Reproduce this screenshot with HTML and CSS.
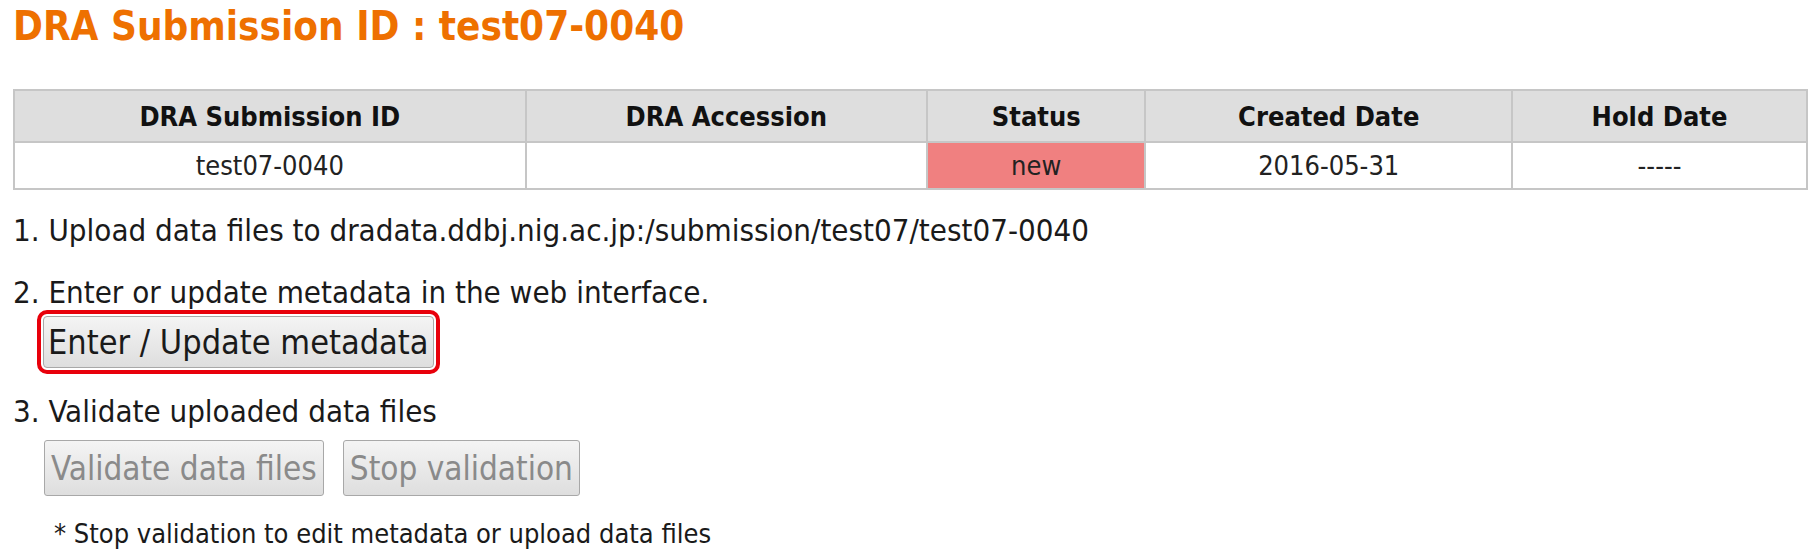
FILE: index.html
```html
<!DOCTYPE html>
<html>
<head>
<meta charset="utf-8">
<link rel="stylesheet" href="styles.css">
</head>
<body>
<div class="page">
  <h1 class="title">DRA Submission ID : test07-0040</h1>
  <table class="info">
    <thead>
      <tr>
        <th class="c1">DRA Submission ID</th>
        <th class="c2">DRA Accession</th>
        <th class="c3">Status</th>
        <th class="c4">Created Date</th>
        <th class="c5">Hold Date</th>
      </tr>
    </thead>
    <tbody>
      <tr>
        <td>test07-0040</td>
        <td></td>
        <td class="status-new">new</td>
        <td>2016-05-31</td>
        <td>-----</td>
      </tr>
    </tbody>
  </table>

  <p class="step step1">1. Upload data files to dradata.ddbj.nig.ac.jp:/submission/test07/test07-0040</p>

  <p class="step step2">2. Enter or update metadata in the web interface.</p>
  <div class="actions">
    <button class="btn btn-highlight">Enter / Update metadata</button>
  </div>

  <p class="step step3">3. Validate uploaded data files</p>
  <div class="actions actions-row">
    <button class="btn btn-validate" disabled>Validate data files</button>
    <button class="btn btn-stop" disabled>Stop validation</button>
  </div>

  <p class="note">* Stop validation to edit metadata or upload data files</p>
</div>
</body>
</html>
```

FILE: styles.css
```css
html, body {
  margin: 0;
  padding: 0;
  background: #ffffff;
}

body {
  font-family: "DejaVu Sans Condensed", "DejaVu Sans", sans-serif;
  font-stretch: condensed;
  color: #1a1a1a;
}

.page {
  padding: 0 10px 0 13px;
}

.title {
  margin: 0;
  font-size: 40px;
  line-height: 52px;
  font-weight: bold;
  color: #ee7000;
}

.info {
  margin-top: 37px;
  width: 1795px;
  border-collapse: collapse;
  border: 2px solid #c6c6c6;
  table-layout: fixed;
}

.info th,
.info td {
  border: 2px solid #c6c6c6;
  text-align: center;
  padding: 0;
}

.info th {
  background: #dedede;
  font-size: 27px;
  font-weight: bold;
  color: #111;
  height: 50px;
}

.info td {
  font-size: 27px;
  color: #222;
  height: 45px;
}

.c1 { width: 28.58%; }
.c2 { width: 22.4%; }
.c3 { width: 12.14%; }
.c4 { width: 20.45%; }
.c5 { width: 16.43%; }

.info td.status-new {
  background: #f08080;
}

.step {
  margin: 0;
  font-size: 31px;
  line-height: 36px;
}

.step1 { margin-top: 22px; }
.step2 { margin-top: 26px; }
.step3 { margin-top: 25px; }

.actions {
  padding-left: 31px;
  display: flex;
}

.actions-row {
  margin-top: 11px;
  gap: 19px;
}

.btn {
  font-family: "DejaVu Sans Condensed", "DejaVu Sans", sans-serif;
  font-stretch: condensed;
  font-size: 34px;
  height: 54px;
  padding: 0 6px;
  border: 1px solid #a8a8a8;
  border-radius: 3px;
  background: linear-gradient(#f4f4f4, #dedede);
  color: #1a1a1a;
}

.btn-highlight {
  margin-top: 6px;
  margin-left: -1px;
  padding: 0 4px;
  height: 52px;
  outline: 4px solid #e8000b;
  outline-offset: 2px;
  border-radius: 4px;
}

.btn[disabled] {
  height: 56px;
  font-size: 33px;
  color: #8a8a8a;
}

.note {
  margin: 22px 0 0 41px;
  font-size: 27px;
  line-height: 32px;
}
```
